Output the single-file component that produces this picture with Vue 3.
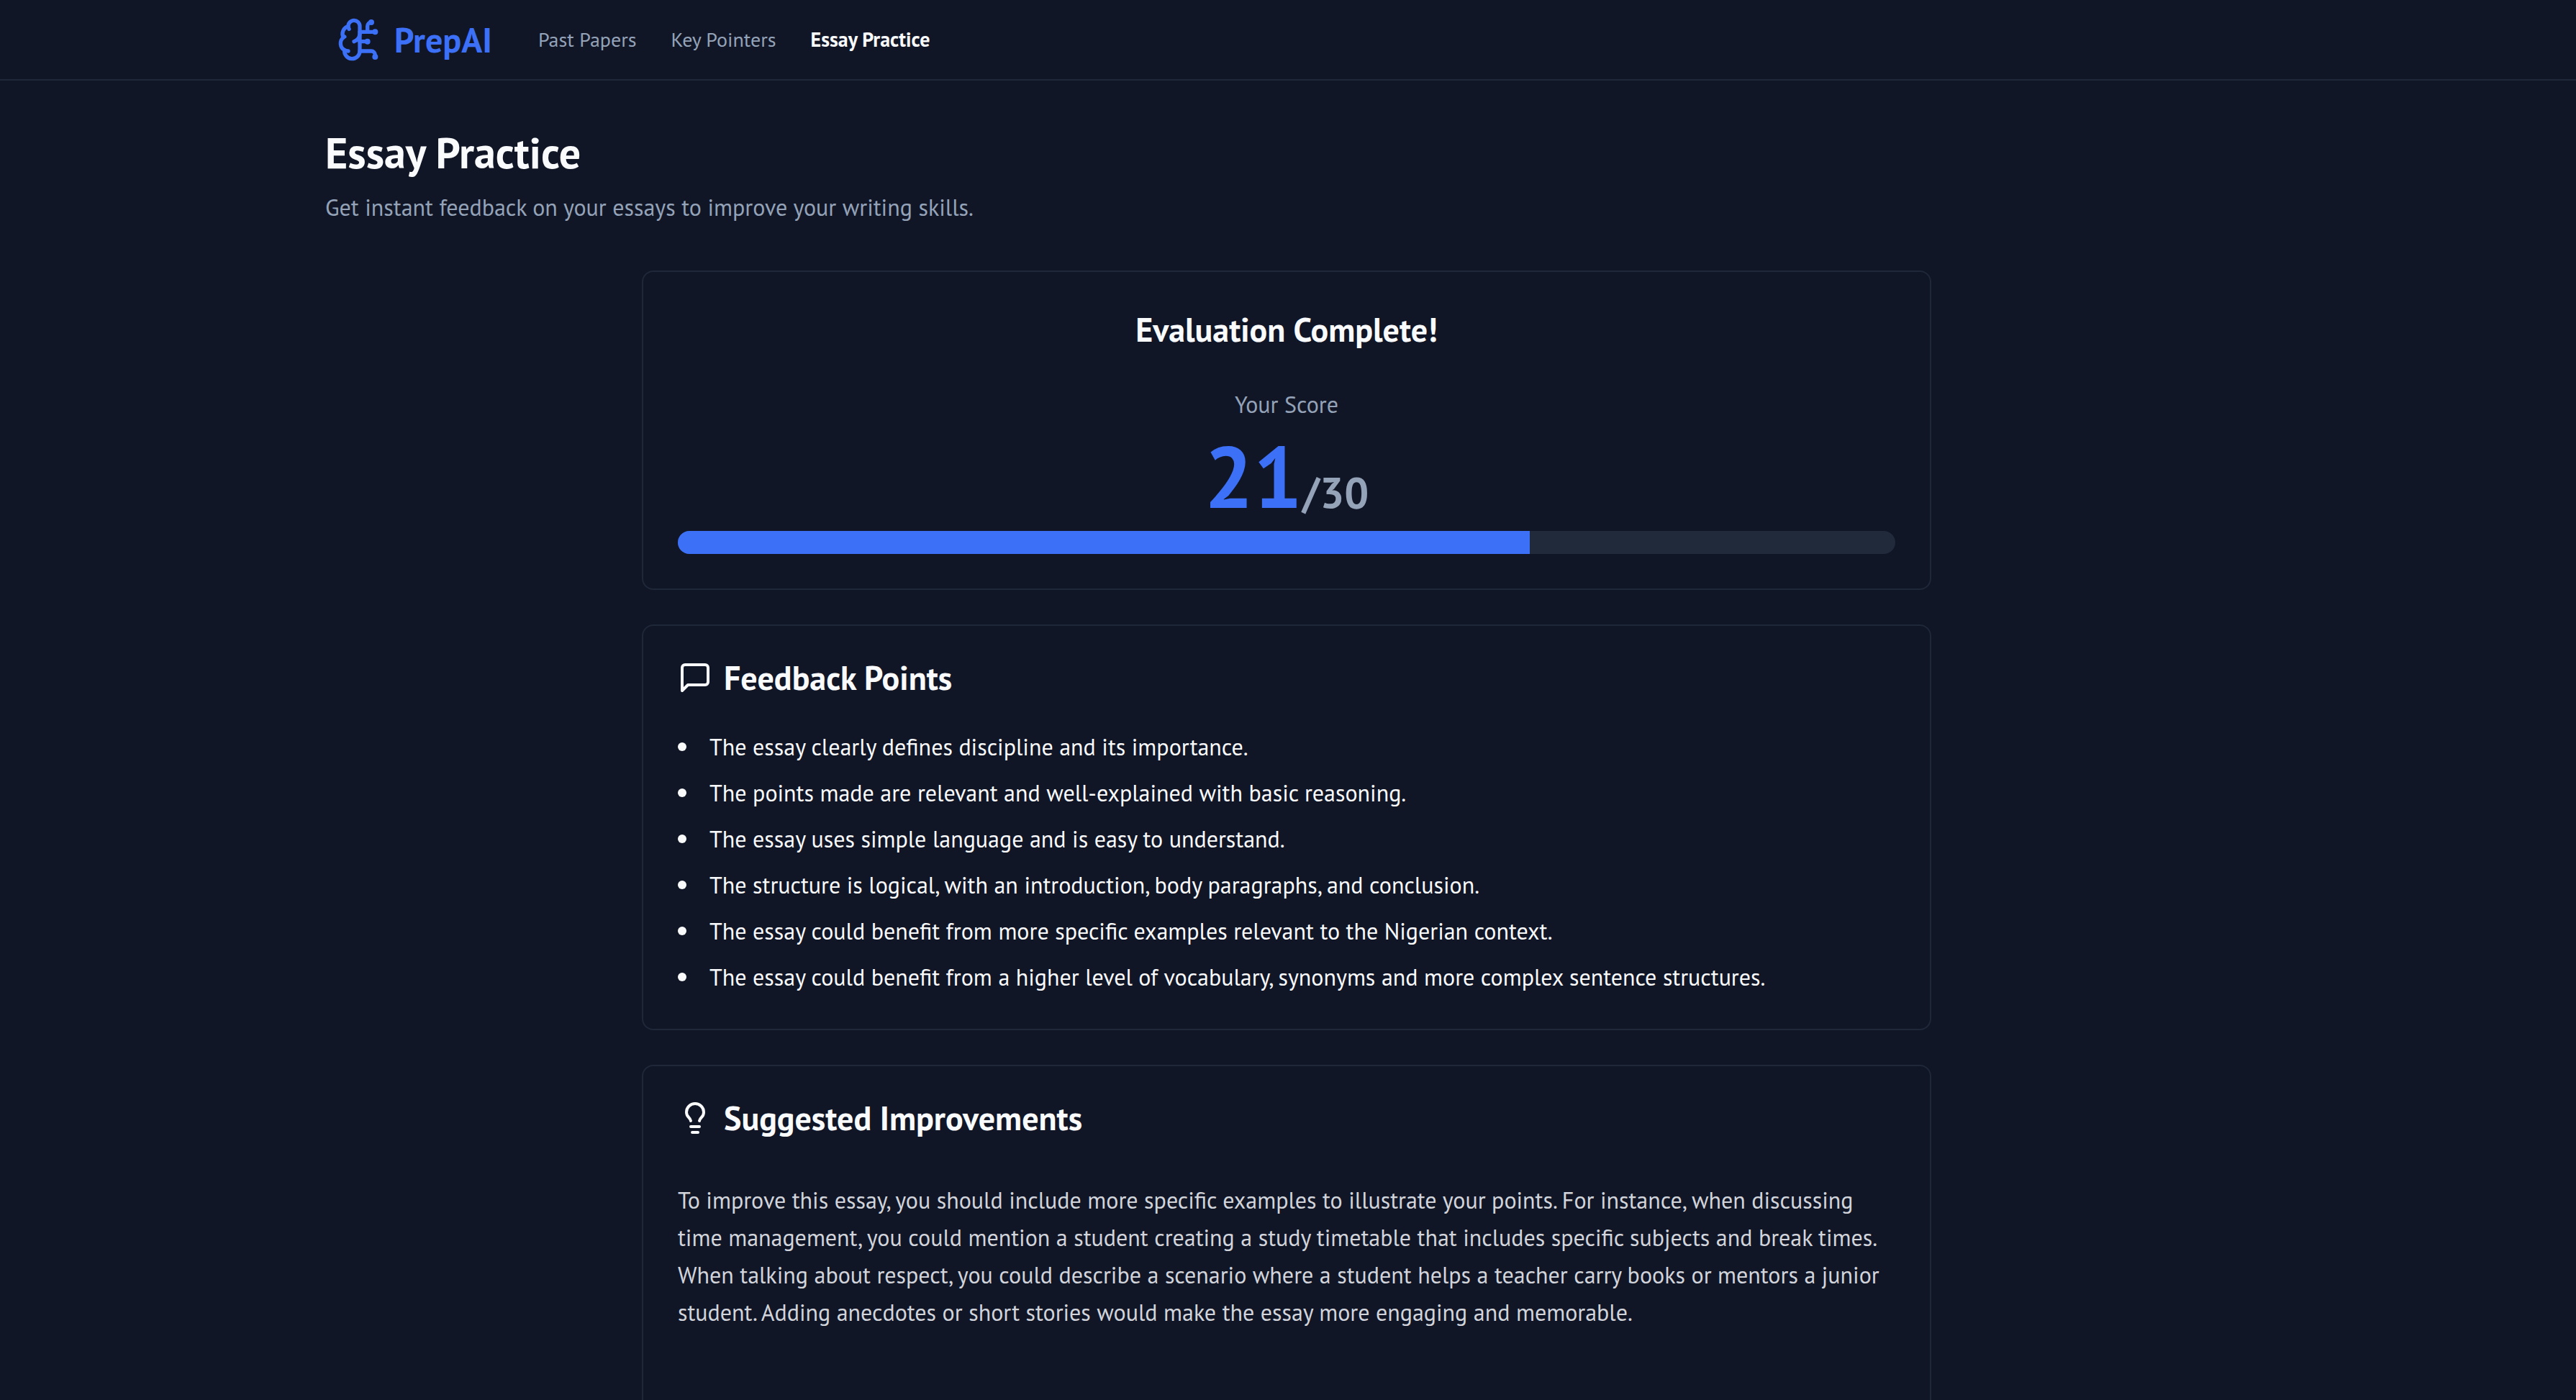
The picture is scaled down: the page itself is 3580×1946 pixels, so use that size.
<script setup>
const links = [
  { label: 'Past Papers', active: false },
  { label: 'Key Pointers', active: false },
  { label: 'Essay Practice', active: true },
]

const score = 21
const total = 30

const feedback = [
  'The essay clearly defines discipline and its importance.',
  'The points made are relevant and well-explained with basic reasoning.',
  'The essay uses simple language and is easy to understand.',
  'The structure is logical, with an introduction, body paragraphs, and conclusion.',
  'The essay could benefit from more specific examples relevant to the Nigerian context.',
  'The essay could benefit from a higher level of vocabulary, synonyms and more complex sentence structures.',
]
</script>

<template>
  <div class="page">
    <header class="topbar">
      <div class="topbar-inner">
        <a class="brand" href="#">
          <svg class="brand-icon" viewBox="0 0 24 24" aria-hidden="true">
            <path d="M12 5a3 3 0 1 0-5.997.125 4 4 0 0 0-2.526 5.77 4 4 0 0 0 .556 6.588A4 4 0 1 0 12 18Z" />
            <path d="M9 13a4.5 4.5 0 0 0 3-4" />
            <path d="M6.003 5.125A3 3 0 0 0 6.401 6.5" />
            <path d="M3.477 10.896a4 4 0 0 1 .585-.396" />
            <path d="M6 18a4 4 0 0 1-1.967-.516" />
            <path d="M12 13h4" />
            <path d="M12 18h6a2 2 0 0 1 2 2v1" />
            <path d="M12 8h8" />
            <path d="M16 8V5a2 2 0 0 1 2-2" />
            <circle cx="16" cy="13" r=".5" />
            <circle cx="18" cy="3" r=".5" />
            <circle cx="20" cy="21" r=".5" />
            <circle cx="20" cy="8" r=".5" />
          </svg>
          <span>PrepAI</span>
        </a>
        <nav class="links">
          <a v-for="link in links" :key="link.label" href="#" :class="{ active: link.active }">{{ link.label }}</a>
        </nav>
      </div>
    </header>

    <main>
      <div class="content">
        <h1>Essay Practice</h1>
        <p class="lead">Get instant feedback on your essays to improve your writing skills.</p>

        <div class="cards">
          <section class="card result">
            <h2>Evaluation Complete!</h2>
            <p class="score-label">Your Score</p>
            <p class="score">{{ score }}<span>/{{ total }}</span></p>
            <div class="track" role="progressbar" :aria-valuenow="score" aria-valuemin="0" :aria-valuemax="total" aria-label="Your Score">
              <div class="fill" :style="{ width: (score / total) * 100 + '%' }"></div>
            </div>
          </section>

          <section class="card">
            <h2 class="with-icon">
              <svg viewBox="0 0 24 24" aria-hidden="true">
                <path d="M21 15a2 2 0 0 1-2 2H7l-4 4V5a2 2 0 0 1 2-2h14a2 2 0 0 1 2 2z" />
              </svg>
              Feedback Points
            </h2>
            <ul class="points">
              <li v-for="point in feedback" :key="point">{{ point }}</li>
            </ul>
          </section>

          <section class="card">
            <h2 class="with-icon">
              <svg viewBox="0 0 24 24" aria-hidden="true">
                <path d="M15 14c.2-1 .7-1.7 1.5-2.5 1-.9 1.5-2.2 1.5-3.5A6 6 0 0 0 6 8c0 1 .2 2.2 1.5 3.5.7.7 1.3 1.5 1.5 2.5" />
                <path d="M9 18h6" />
                <path d="M10 22h4" />
              </svg>
              Suggested Improvements
            </h2>
            <p class="advice">
              To improve this essay, you should include more specific examples to illustrate your points. For instance,
              when discussing time management, you could mention a student creating a study timetable that includes
              specific subjects and break times. When talking about respect, you could describe a scenario where a
              student helps a teacher carry books or mentors a junior student. Adding anecdotes or short stories would
              make the essay more engaging and memorable.
            </p>
          </section>
        </div>
      </div>
    </main>
  </div>
</template>

<style>
html {
  background: #111627;
  scrollbar-width: none;
}
</style>

<style scoped>
.page {
  min-height: 100vh;
  background: #111627;
  color: #f9fafb;
  font-family: "PT Sans", "Noto Sans", sans-serif;
  font-size: 32px;
  line-height: 48px;
}

h1,
h2,
p,
ul {
  margin: 0;
  padding: 0;
}

a {
  color: inherit;
  text-decoration: none;
}

svg {
  flex: none;
  fill: none;
  stroke: currentColor;
  stroke-width: 2;
  stroke-linecap: round;
  stroke-linejoin: round;
}

.topbar {
  border-bottom: 2px solid #1f2838;
}

.topbar,
main {
  padding-right: 4px;
}

.topbar-inner,
.content {
  box-sizing: border-box;
  max-width: 2672px;
  margin: 0 auto;
}

.topbar-inner {
  display: flex;
  align-items: center;
  gap: 64px;
  height: 110px;
  padding: 0 16px;
}

.brand {
  display: flex;
  align-items: center;
  gap: 16px;
  color: #3b70f7;
  font-size: 48px;
  font-weight: 700;
}

.brand-icon {
  width: 64px;
  height: 64px;
}

.links {
  display: flex;
  gap: 48px;
  color: #94a3b8;
  font-size: 28px;
}

.links .active {
  color: #f9fafb;
  font-weight: 700;
}

.content {
  padding: 64px 0;
}

h1 {
  font-size: 60px;
  line-height: 72px;
}

.lead {
  margin-top: 16px;
  color: #94a3b8;
}

.cards {
  display: flex;
  flex-direction: column;
  gap: 48px;
  max-width: 1792px;
  margin: 64px auto 0;
}

.card {
  padding: 48px;
  border: 2px solid #1f2838;
  border-radius: 16px;
}

h2 {
  font-size: 46px;
  line-height: 48px;
}

.with-icon {
  display: flex;
  align-items: center;
  gap: 16px;
}

.with-icon svg {
  width: 48px;
  height: 48px;
}

.result {
  text-align: center;
}

.result h2 {
  line-height: 64px;
}

.score-label {
  margin-top: 48px;
  color: #94a3b8;
}

.score {
  margin: 16px 0;
  color: #3b70f7;
  font-size: 120px;
  font-weight: 700;
  line-height: 120px;
}

.score span {
  color: #94a3b8;
  font-size: 60px;
  line-height: 60px;
}

.track {
  height: 32px;
  overflow: hidden;
  border-radius: 16px;
  background: #202a3a;
}

.fill {
  height: 100%;
  background: #3b70f7;
}

.points {
  display: flex;
  flex-direction: column;
  gap: 16px;
  margin-top: 48px;
  list-style: none;
}

.points li {
  display: flex;
  gap: 32px;
}

.points li::before {
  content: "";
  flex: none;
  width: 12px;
  height: 12px;
  margin-top: 18px;
  border-radius: 50%;
  background: currentColor;
}

.advice {
  margin-top: 64px;
  padding-bottom: 64px;
  color: #d1d5db;
  line-height: 52px;
}
</style>
